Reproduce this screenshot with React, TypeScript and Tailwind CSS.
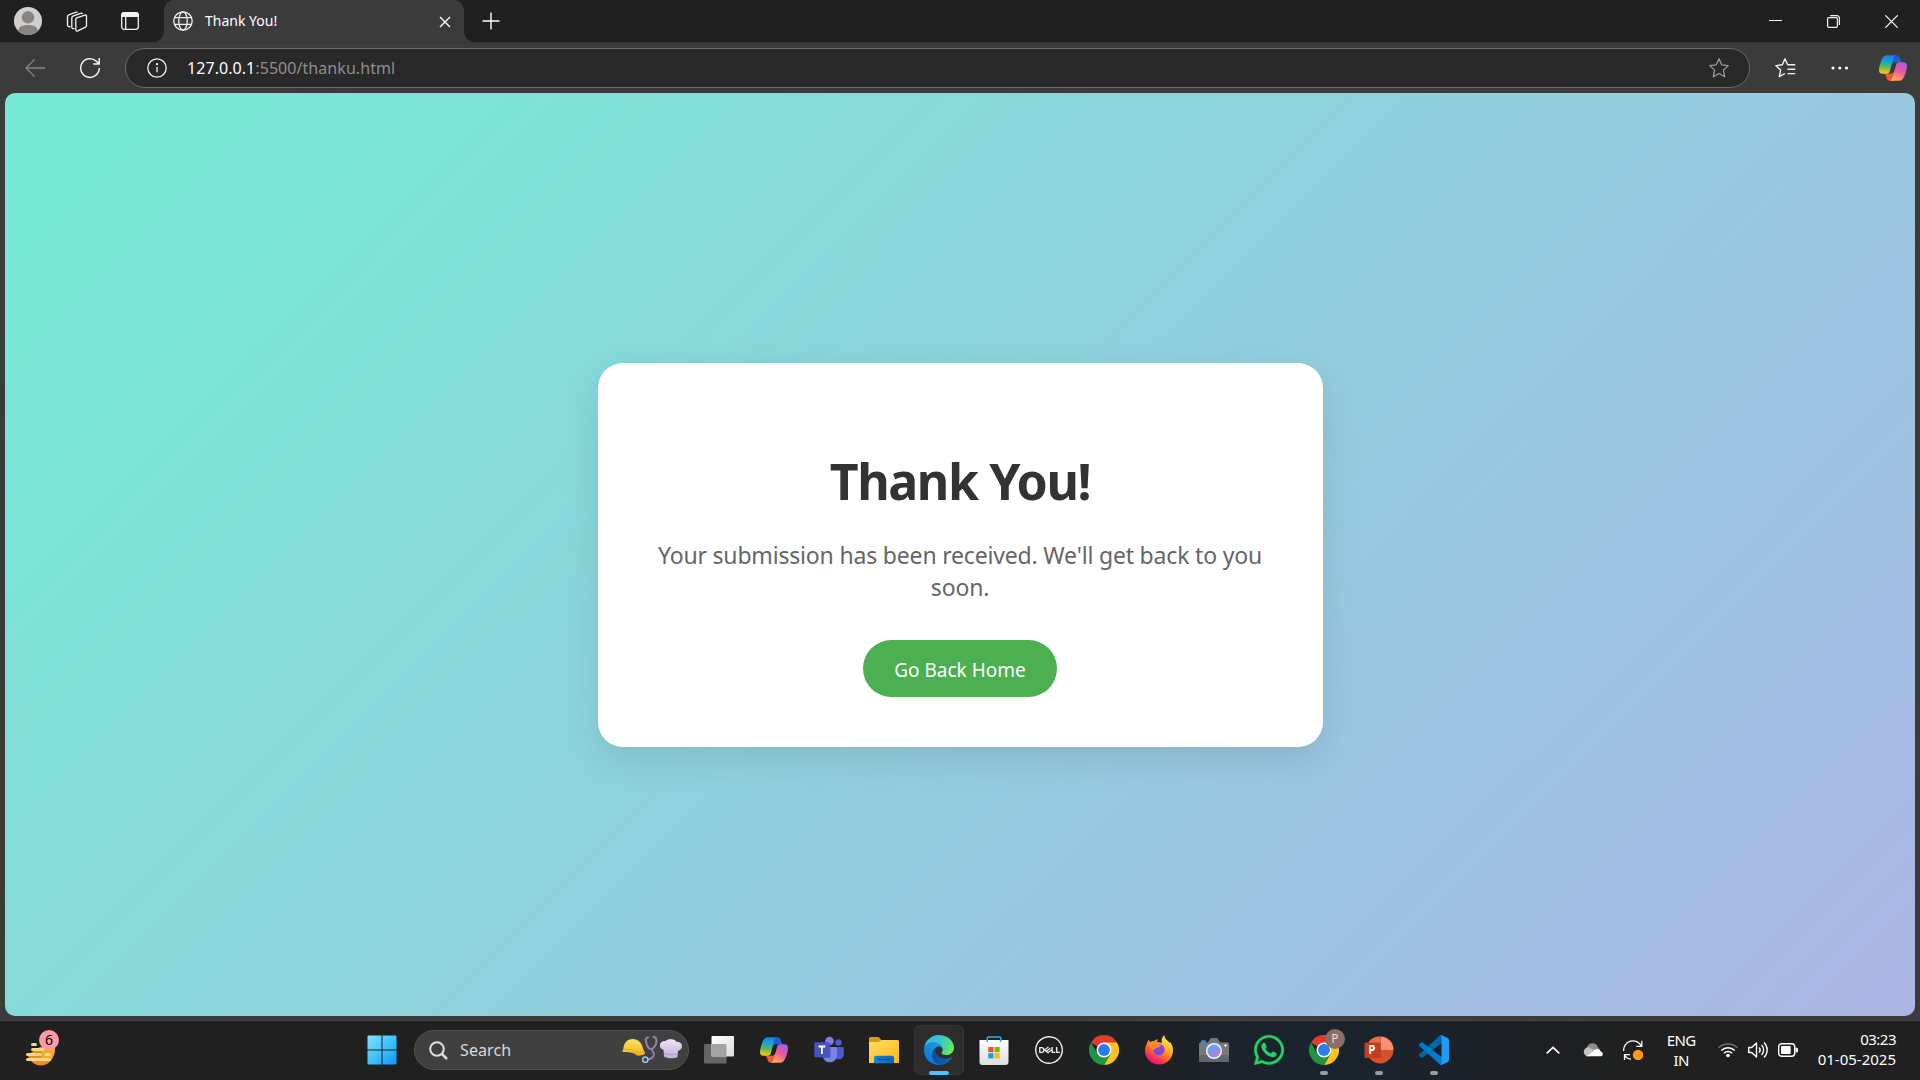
import type { ReactNode } from "react";
import { FaWhatsapp } from "react-icons/fa";
import { SiDell } from "react-icons/si";

function Copilot({ id }: { id: string }) {
  return (
    <svg viewBox="0 0 24 22" className="h-[26px] w-[28px]">
      <defs>
        <linearGradient id={`${id}a`} x1="0.2" y1="0" x2="0.1" y2="1">
          <stop offset="0" stopColor="#1583e8" />
          <stop offset="0.3" stopColor="#12a3d8" />
          <stop offset="0.6" stopColor="#58b95a" />
          <stop offset="0.9" stopColor="#e8c316" />
        </linearGradient>
        <linearGradient id={`${id}b`} x1="0.8" y1="0" x2="0.3" y2="1">
          <stop offset="0" stopColor="#a45bf0" />
          <stop offset="0.5" stopColor="#f05a94" />
          <stop offset="1" stopColor="#ffb15c" />
        </linearGradient>
        <linearGradient id={`${id}c`} x1="0" y1="0" x2="1" y2="1">
          <stop offset="0" stopColor="#1a4fd0" />
          <stop offset="1" stopColor="#1572ee" />
        </linearGradient>
      </defs>
      <path fill={`url(#${id}c)`} d="M17.533 1.829A2.528 2.528 0 0015.11 0h-.737a2.531 2.531 0 00-2.484 2.087l-1.263 6.937.314-1.08a2.528 2.528 0 012.424-1.833h4.284l1.797.706 1.731-.706h-.505a2.528 2.528 0 01-2.423-1.829l-.715-2.453z" />
      <path fill="#ef5b35" d="M6.726 20.16A2.528 2.528 0 009.152 22h1.566c1.37 0 2.49-1.1 2.525-2.48l.17-6.69-.357 1.228a2.528 2.528 0 01-2.423 1.83h-4.32l-1.54-.842-1.667.843h.497c1.124 0 2.113.75 2.426 1.84l.697 2.432z" />
      <path fill={`url(#${id}a)`} d="M15 0H6.252c-2.5 0-4 3.331-5 6.662-1.184 3.947-2.734 9.225 1.75 9.225H6.78c1.13 0 2.12-.753 2.43-1.847.657-2.317 1.809-6.359 2.713-9.436.46-1.563.842-2.906 1.43-3.742A1.97 1.97 0 0115 0" />
      <path fill={`url(#${id}b)`} d="M9 22h8.749c2.5 0 4-3.332 5-6.663 1.184-3.948 2.734-9.227-1.75-9.227H17.22c-1.129 0-2.12.754-2.43 1.848a1149.2 1149.2 0 01-2.713 9.437c-.46 1.564-.842 2.907-1.43 3.743A1.97 1.97 0 019 22" />
    </svg>
  );
}

function Chrome() {
  return (
    <svg viewBox="0 0 48 48" className="size-[30px]">
      <path fill="#e33b2e" d="M24 24 3.2 12A24 24 0 0 1 44.8 12Z" />
      <path fill="#fcc31e" d="M24 12H44.8A24 24 0 0 1 24 48L34.4 30Z" />
      <path fill="#229342" d="M3.2 12A24 24 0 0 0 24 48L34.4 30 24 24 13.6 30Z" />
      <circle cx="24" cy="24" r="12" fill="#fff" />
      <circle cx="24" cy="24" r="9.5" fill="#2b7bf0" />
    </svg>
  );
}

function Edge() {
  return (
    <svg viewBox="0 0 256 256" className="size-[30px]">
      <defs>
        <linearGradient id="e1" x1="0.2" y1="0.5" x2="1" y2="0.5">
          <stop offset="0" stopColor="#0c4f9c" />
          <stop offset="1" stopColor="#1268bd" />
        </linearGradient>
        <linearGradient id="e2" x1="0.7" y1="0" x2="0.3" y2="1">
          <stop offset="0" stopColor="#1b9de2" />
          <stop offset="0.5" stopColor="#1384dc" />
          <stop offset="1" stopColor="#0a78d4" />
        </linearGradient>
        <linearGradient id="e3" x1="0" y1="0.3" x2="1" y2="0.6">
          <stop offset="0" stopColor="#35b9ee" />
          <stop offset="0.5" stopColor="#36c5c8" />
          <stop offset="1" stopColor="#68eb58" />
        </linearGradient>
      </defs>
      <path fill="url(#e1)" d="M231 190.5c-3.4 1.8-6.9 3.4-10.5 4.7a101.5 101.5 0 0 1-35.9 6.5c-47.2 0-88.3-32.5-88.3-74.2.1-11.4 6.4-21.9 16.4-27.3-42.7 1.8-53.7 46.3-53.7 72.4 0 73.8 68 81.3 82.7 81.3 7.9 0 19.8-2.3 27-4.6l1.3-.4a128.3 128.3 0 0 0 66.6-52.8 4 4 0 0 0-5.6-5.6z" />
      <path fill="url(#e2)" d="M105.7 241.4a79.2 79.2 0 0 1-22.7-21.3 80.7 80.7 0 0 1 29.5-120c3.2-1.5 8.5-4.1 15.6-4a32.4 32.4 0 0 1 25.7 13 31.9 31.9 0 0 1 6.3 18.7c0-.2 24.5-79.6-80-79.6-43.9 0-80 41.7-80 78.2-.2 19.3 4 38.5 12.1 56a128 128 0 0 0 156.4 67 75.5 75.5 0 0 1-62.8-8z" />
      <path fill="url(#e3)" d="M152.3 148.9c-.8 1-3.3 2.5-3.3 5.7 0 2.6 1.7 5.1 4.7 7.2 14.4 10 41.5 8.7 41.6 8.7 10.7 0 21.1-2.9 30.3-8.3a61.4 61.4 0 0 0 30.4-52.9c.3-22.4-8-37.3-11.3-43.9C223.4 23.8 177.7 0 128 0A128 128 0 0 0 0 126.2c.5-36.5 36.8-66 80-66 3.5 0 23.5.3 42 10.1 16.3 8.6 24.9 19 30.8 29.2 6.2 10.7 7.3 24.1 7.3 29.5 0 5.3-2.7 13.3-7.8 19.9z" />
    </svg>
  );
}

function Firefox() {
  return (
    <svg viewBox="0 0 30 30" className="size-[30px]">
      <defs>
        <linearGradient id="f1" x1="0.8" y1="0.05" x2="0.25" y2="0.95">
          <stop offset="0" stopColor="#fff04a" />
          <stop offset="0.35" stopColor="#ffb52c" />
          <stop offset="0.6" stopColor="#ff6a2e" />
          <stop offset="0.95" stopColor="#f0146e" />
        </linearGradient>
        <linearGradient id="f2" x1="0.8" y1="0" x2="0.3" y2="1">
          <stop offset="0" stopColor="#a93ad8" />
          <stop offset="1" stopColor="#5f52e8" />
        </linearGradient>
      </defs>
      <path fill="url(#f1)" d="M15 29.5C7.300 29.500 1 23.500 1 16c0-3.500 1-6.200 2.300-8 .1-1.400.6-2.400 1.400-3.200.2 1 .5 1.700 1 2.200C7 6.400 8.500 6 10 6.200c1.500-1.500 2.600-1.800 4-1.900-1 1-1.300 2-1 3.200 2-.4 3.700 0 5 .6-1-2.700-.2-5.600 2.200-8 .3 2.700 1.500 4 3.200 5.600 1.200.6 1.700 1.200 2.200 2.400l.6-1.100C28.100 9.500 29 12.300 29 15.500c0 8-6.300 14-14 14Z" />
      <circle cx="14.800" cy="14.500" r="5.800" fill="url(#f2)" />
      <path fill="#ff8a25" d="M3.300 8.500 4.600 5l1.500 2.300L10 6.200l3.800-1.700-.9 3 .9 1.500 3.500 1.200c-.9 1.700-2.200 2-4 2.300-1.500.6-2.900 1-3.300 3C7.500 14.500 5 11.500 3.300 8.500Z" />
    </svg>
  );
}

function VsCode() {
  return (
    <svg viewBox="0 0 100 100" className="size-[30px]">
      <path fill="#0065a9" d="M96.500 10.800 75.900.9a6.200 6.200 0 0 0-7.100 1.200L1.400 63.600a4.200 4.200 0 0 0 0 6.200l5.500 5a4.200 4.200 0 0 0 5.300.2L93.300 13.400c2.700-2.100 6.700-.1 6.700 3.300v-.3c0-2.400-1.400-4.600-3.500-5.600Z" />
      <path fill="#007acc" d="m96.500 89.200-20.600 9.900a6.200 6.200 0 0 1-7.100-1.200L1.400 36.400a4.200 4.200 0 0 1 0-6.200l5.500-5a4.200 4.200 0 0 1 5.300-.2l81.100 61.600c2.700 2.100 6.700.1 6.700-3.300v.2c0 2.400-1.400 4.600-3.500 5.700Z" />
      <path fill="#1f9cf0" d="M75.900 99.100a6.200 6.200 0 0 1-7.200-1.200c2.300 2.300 6.300.7 6.300-2.600V4.700c0-3.300-4-5-6.300-2.600A6.200 6.200 0 0 1 75.900.9l20.600 9.900A6.200 6.200 0 0 1 100 16.400v67.200c0 2.400-1.400 4.600-3.500 5.600Z" />
    </svg>
  );
}

function PowerPoint() {
  return (
    <svg viewBox="0 0 30 30" className="size-[30px]">
      <path fill="#d35230" d="M16.500 15 3.500 20A13.500 13.500 0 0 0 29.500 15Z" />
      <path fill="#ed6c47" d="M16.500 1.500A13 13 0 0 0 3.500 20L16.500 15Z" />
      <path fill="#ff8f6b" d="M16.500 1.500A13.300 13.300 0 0 1 29.500 15h-13Z" />
      <path fill="#a33018" opacity=".5" d="M8 8h8a1 1 0 0 1 1 1v14H6Z" />
      <rect x="0.500" y="7.500" width="15.500" height="15.500" rx="1" fill="#c43e1c" />
      <text x="4.200" y="19.300" fill="#fff" className="font-['Open_Sans'] text-[11.500px] font-bold">P</text>
    </svg>
  );
}

function Teams() {
  return (
    <svg viewBox="0 0 30 30" className="size-[30px]">
      <circle cx="24.500" cy="7.500" r="3.200" fill="#5059c9" />
      <path fill="#5059c9" d="M18 12h10.500a1.300 1.300 0 0 1 1.300 1.300v6.200a4.800 4.800 0 0 1-4.800 4.800h-4Z" />
      <circle cx="15.500" cy="6" r="4.300" fill="#7b83eb" />
      <path fill="#7b83eb" d="M10 12h11.500a1.500 1.500 0 0 1 1.500 1.500v7.300a7.300 7.300 0 0 1-14.500 0Z" />
      <path fill="#3d448f" opacity=".6" d="M9 8h6.500a1 1 0 0 1 1 1v14H9Z" />
      <rect x="0.300" y="7.300" width="15" height="15" rx="1" fill="#4a52bd" />
      <path stroke="#fff" strokeWidth="1.800" fill="none" d="M4.500 11.500h6.800M7.900 11.500v7.500" />
    </svg>
  );
}

function Folder() {
  return (
    <svg viewBox="0 0 30 30" className="size-[30px]">
      <defs>
        <linearGradient id="fo" x1="0" y1="0" x2="1" y2="1">
          <stop offset="0" stopColor="#ffdc6b" />
          <stop offset="1" stopColor="#fdb90f" />
        </linearGradient>
        <linearGradient id="fb" x1="0" y1="0" x2="1" y2="0">
          <stop offset="0" stopColor="#1487dc" />
          <stop offset="1" stopColor="#0a63b4" />
        </linearGradient>
      </defs>
      <path fill="#dd9c07" d="M0 3.500A1.500 1.500 0 0 1 1.500 2h7.200c.7 0 1.200.3 1.600.7L12.500 5v4H0Z" />
      <path fill="url(#fo)" d="M0 7h9.500l3-2H28.500A1.500 1.500 0 0 1 30 6.500V28H0Z" />
      <path fill="url(#fb)" d="M5 28.200V23a2.200 2.200 0 0 1 2.200-2.200h15.600A2.200 2.200 0 0 1 25 23v5.200Z" />
      <rect x="8" y="23.800" width="14" height="1.400" rx=".7" fill="#0a4f92" />
    </svg>
  );
}

function Store() {
  return (
    <svg viewBox="0 0 30 30" className="size-[30px]">
      <defs>
        <linearGradient id="st" x1="0" y1="0" x2="0" y2="1">
          <stop offset="0" stopColor="#ffffff" />
          <stop offset="1" stopColor="#dedede" />
        </linearGradient>
      </defs>
      <path fill="url(#st)" d="M.500 5h29v22a3 3 0 0 1-3 3h-23a3 3 0 0 1-3-3Z" />
      <path fill="none" stroke="#28aeea" strokeWidth="1.600" d="M8.300 7V3a1 1 0 0 1 1-1h11.400a1 1 0 0 1 1 1v4" />
      <path fill="#f25022" d="M9.300 12h5.200v5.200H9.300z" />
      <path fill="#7fba00" d="M15.500 12h5.200v5.200h-5.200z" />
      <path fill="#00a4ef" d="M9.300 18.200h5.200v5.200H9.300z" />
      <path fill="#ffb900" d="M15.500 18.200h5.200v5.200h-5.200z" />
    </svg>
  );
}

function Camera() {
  return (
    <svg viewBox="0 0 30 30" className="size-[30px]">
      <defs>
        <linearGradient id="ca" x1="0.2" y1="0" x2="0.8" y2="1">
          <stop offset="0" stopColor="#4fb2ee" />
          <stop offset="0.500" stopColor="#8b8de8" />
          <stop offset="1" stopColor="#c97be0" />
        </linearGradient>
      </defs>
      <rect x="2" y="5.200" width="5" height="4" rx="1" fill="#1e8fd8" />
      <path fill="#747a80" d="M1.500 7.500H9l1.800-3.300C11.200 3.500 11.800 3 12.600 3h4.800c.8 0 1.400.5 1.800 1.200L21 7.500h7.500A1.500 1.500 0 0 1 30 9v16.500a1.500 1.500 0 0 1-1.500 1.500h-27A1.500 1.500 0 0 1 0 25.500V9a1.500 1.500 0 0 1 1.500-1.500Z" />
      <path fill="#62686e" d="M0 20h30v5.500a1.500 1.500 0 0 1-1.500 1.500h-27A1.500 1.500 0 0 1 0 25.500Z" />
      <circle cx="15" cy="16" r="8" fill="#f5f5f5" />
      <circle cx="15" cy="16" r="6.500" fill="url(#ca)" />
      <path stroke="#e8e8e8" d="M26.500 9v3M25 10.500h3" />
    </svg>
  );
}

function TaskView() {
  return (
    <svg viewBox="0 0 30 30" className="size-[30px]">
      <defs>
        <linearGradient id="tv" x1="0" y1="0" x2="1" y2="1">
          <stop offset="0" stopColor="#fff" />
          <stop offset="1" stopColor="#dcdcdc" />
        </linearGradient>
      </defs>
      <rect x="0" y="9" width="22.500" height="19.500" rx="1" fill="#666" />
      <rect x="7.500" y="1" width="22.500" height="20.500" rx="1" fill="url(#tv)" />
      <path fill="#a3a3a3" d="M7.500 9h14a1 1 0 0 1 1 1v11.500h-14a1 1 0 0 1-1-1Z" />
    </svg>
  );
}

function TaskbarApp({ children, active, running }: { children: ReactNode; active?: boolean; running?: boolean }) {
  return (
    <div className={active ? "relative flex size-[50px] items-center justify-center rounded-md border border-[#373737] bg-[#2d2d2d]" : "relative flex size-[50px] items-center justify-center"}>
      {children}
      {active && <span className="absolute -bottom-px h-1 w-5 rounded-full bg-[#4cc2ff]" />}
      {running && <span className="absolute bottom-0 h-1 w-2 rounded-full bg-[#9a9da1]" />}
    </div>
  );
}

function SearchArt() {
  return (
    <svg viewBox="0 0 62 30" className="h-[30px] w-[62px]">
      <defs>
        <linearGradient id="hh" x1="0" y1="0" x2="0" y2="1">
          <stop offset="0" stopColor="#ffe25a" />
          <stop offset="1" stopColor="#eeb41e" />
        </linearGradient>
        <linearGradient id="ch" x1="0" y1="0" x2="0" y2="1">
          <stop offset="0" stopColor="#eee4f6" />
          <stop offset="1" stopColor="#c6add9" />
        </linearGradient>
      </defs>
      <path fill="url(#hh)" d="M1.200 14.500C1.600 8 5.500 4 10.500 4c6 0 10 4.500 11 11l1.500 2.500c0 2-1.500 2.500-3.500 2.500-3 1.500-5 .5-7-1.500-4-1.500-8-1.500-11.800-1.500C.1 16 .4 15 1.200 14.500Z" />
      <path fill="none" stroke="#c58d12" strokeWidth=".7" d="M2 14.500c4-.8 9 0 13 2.500 2 1 4.500 1 6.500-.5" opacity=".5" />
      <path fill="none" stroke="#9480b0" strokeWidth="2" strokeLinecap="round" d="M26 2.500c-2.500.5-2.500 2-2 4 .8 4.500 2.800 7.500 5 7.500 3 0 5.500-4.500 5.500-8.500 0-2-.5-3.500-3-3.500M29.500 14c1.500 3 3.500 4.500 2 7-1.500 2.800-4.500 3.500-7.500 3.500" />
      <circle cx="23.300" cy="24.700" r="2.600" fill="#35455e" stroke="#9fc6ee" strokeWidth="1.500" />
      <path fill="url(#ch)" d="M41.500 14.800C38.500 14 37.500 12 38 9.500c.5-2.500 3-3.800 5.500-3.300C44.500 4.500 47 4 49 4.200c2.500-.2 4.500.8 5.500 2.600 2.800-.2 5.300 1.200 5.500 3.700.2 3-1.500 4.800-4 5.500l-.5 6c-2.500 2-11 1.500-13.500-.5Z" />
      <path fill="none" stroke="#a992bf" strokeWidth=".7" d="M42 18.500c3.500 1 9 1.200 13.300.3" />
    </svg>
  );
}

function BrowserHeader() {
  return (
    <header className="bg-[#3b3b3b]">
      <div className="flex h-[42px] bg-[#202020]">
        <div className="flex w-[164px] items-center pl-3.5">
          <svg viewBox="0 0 28 28" className="size-7">
            <circle cx="14" cy="14" r="14" fill="#d2d0ce" />
            <circle cx="14" cy="10.300" r="6.200" fill="#8a8481" />
            <path fill="#8a8481" d="M4 23.800c1-4.200 4.600-5.800 10-5.800s9 1.600 10 5.800A14 14 0 0 1 4 23.800Z" />
          </svg>
          <svg viewBox="0 0 22 22" className="mt-px ml-6 size-[22px] fill-none stroke-[#f2f2f2]" strokeWidth="1.300" strokeLinejoin="round">
            <path d="M9.800 8.300c0-.7.3-1.200 1-1.500l8-2.700c1-.3 1.700.1 1.700 1.100v9.300c0 .8-.4 1.300-1 1.600l-7.700 3.800c-1.100.5-2 .1-2-1.100Z" />
            <path d="M8.500 17.500c-1.400.5-2.700 0-2.700-1.200V7c0-.9.400-1.500 1.200-1.800L14.500 2.400c1-.4 1.700-.2 2 .5" />
            <path d="M4.500 15.600c-1.700.5-3-.2-3-1.500V5.700c0-.9.400-1.500 1.200-1.800L9.500 1.300c1-.4 1.700-.2 2 .4" />
          </svg>
          <svg viewBox="0 0 20 20" className="ml-8 size-5 fill-none stroke-[#f2f2f2]" strokeWidth="1.300">
            <rect x="1.700" y="1.700" width="16.600" height="16.600" rx="2.500" />
            <path fill="#f2f2f2" stroke="none" d="M1 6V4.500A3.500 3.500 0 0 1 4.500 1h11A3.500 3.500 0 0 1 19 4.500V6Z" />
            <path d="M5.700 5v13" />
          </svg>
        </div>
        <div className="relative flex w-[300px] items-center rounded-t-[10px] bg-[#3b3b3b] pl-[9px] pr-3.5">
          <span className="absolute bottom-0 -left-[10px] size-[10px] bg-[radial-gradient(circle_at_0_0,#202020_9.500px,#3b3b3b_10px)]" />
          <span className="absolute -right-[10px] bottom-0 size-[10px] bg-[radial-gradient(circle_at_100%_0,#202020_9.500px,#3b3b3b_10px)]" />
          <svg viewBox="0 0 20 20" className="size-5 fill-none stroke-[#f2f2f2]" strokeWidth="1.300">
            <circle cx="10" cy="10" r="9.200" />
            <ellipse cx="10" cy="10" rx="4.200" ry="9.200" />
            <path d="M1.500 6.700h17M1.500 13.300h17" />
          </svg>
          <span className="ml-3 text-[14px] leading-5 text-white">Thank You!</span>
          <svg viewBox="0 0 12 12" className="mt-px -mr-px ml-auto size-3 stroke-white" strokeWidth="1.400">
            <path d="m1 1 10 10M11 1 1 11" />
          </svg>
        </div>
        <svg viewBox="0 0 18 18" className="mt-3 ml-[18px] size-[18px] stroke-white" strokeWidth="1.400">
          <path d="M9 .500v17M.500 9h17" />
        </svg>
        <div className="mr-[22px] ml-auto flex items-center gap-[45px]">
          <svg viewBox="0 0 13 13" className="size-[13px] stroke-white"><path d="M0 5.500h13" /></svg>
          <svg viewBox="0 0 13 13" className="size-[13px] fill-none stroke-[#f2f2f2]" strokeWidth="1.200">
            <rect x=".600" y="2.600" width="9.800" height="9.800" rx="1.200" />
            <path d="M3 .600h7A2.400 2.400 0 0 1 12.400 3v7" />
          </svg>
          <svg viewBox="0 0 13 13" className="size-[13px] stroke-white" strokeWidth="1.200"><path d="m.300.300 12.400 12.400M12.700.300.300 12.700" /></svg>
        </div>
      </div>
      <div className="flex h-[51px] items-center border-t border-[#343434] pr-[13px] pl-[25px]">
        <svg viewBox="0 0 20 18" className="h-[18px] w-5 fill-none stroke-[#858585]" strokeWidth="1.300">
          <path d="M20 9H1M9.500.500 1 9l8.500 8.500" />
        </svg>
        <svg viewBox="0 0 22 22" className="ml-[34px] size-[22px] fill-none stroke-[#f2f2f2]" strokeWidth="1.500">
          <path d="M20.300 11A9.300 9.300 0 1 1 17.500 4.400L20 6.700M20.200 1v6h-6" />
        </svg>
        <div className="ml-[24px] flex h-10 w-[1625px] items-center rounded-full border border-[#6a6a6a] bg-[#292929] pr-[19px] pl-[21px]">
          <svg viewBox="0 0 20 20" className="size-5 fill-none stroke-[#f2f2f2]" strokeWidth="1.300">
            <circle cx="10" cy="10" r="9.200" />
            <path d="M10 9v5.300" />
            <circle cx="10" cy="6.200" r=".500" />
          </svg>
          <p className="ml-5 text-[16px] leading-5 tracking-[0.06px] text-[#8f8f8f]"><span className="text-white">127.0.0.1</span>:5500/thanku.html</p>
          <svg viewBox="0 0 22 22" className="ml-auto size-[22px] fill-none stroke-[#9a9a9a]" strokeWidth="1.300" strokeLinejoin="round">
            <path d="m11 1.800 2.700 6 6.500.800-4.800 4.500 1.300 6.600L11 16.500l-5.700 3.200 1.300-6.600L1.800 8.600l6.500-.800Z" />
          </svg>
        </div>
        <svg viewBox="0 0 22 22" className="ml-6 size-[22px] fill-none stroke-[#f2f2f2]" strokeWidth="1.400" strokeLinejoin="round">
          <path d="M13.700 7.800 11 1.800l-2.700 6-6.500.800 4.800 4.500-1.300 6.600L11 16.500M13.500 7.800h7.800M13.500 12.200h7.800M13.500 16.600h7.800" />
        </svg>
        <svg viewBox="0 0 18 4" className="ml-[35px] h-1 w-[18px] fill-white">
          <circle cx="2" cy="2" r="1.600" /><circle cx="8.800" cy="2" r="1.600" /><circle cx="15.500" cy="2" r="1.600" />
        </svg>
        <div className="ml-auto"><Copilot id="tb" /></div>
      </div>
    </header>
  );
}

function Taskbar() {
  return (
    <footer className="flex h-[59px] items-center bg-[linear-gradient(90deg,#202020_0%,#202020_55%,#1a242e_68%,#1b222a_74%,#202020_85%,#202020_100%)] pb-px">
      <div className="relative ml-[26px] h-[35px] w-[34px]">
        <svg viewBox="0 0 34 36" className="h-9 w-[34px]">
          <path fill="#f08a1c" d="M1.500 22 14 14l15-.500c0 12-6 19-14.500 19-5.500 0-10.500-4-13-10.500Z" />
          <path fill="#f6aa28" d="m16 14 13-1c.3 6-1 10-4 14H16Z" />
          <path stroke="#f3d98a" strokeWidth="3" strokeLinecap="round" d="M6.500 11.500h3M6.500 16.500H17M1.500 21.500h13M1.500 26.500h22M20 21.500h3.500" />
        </svg>
        <span className="absolute -top-[3px] left-[13px] flex size-5 items-center justify-center rounded-full bg-[#ff99a4] text-[14px] leading-none text-black">6</span>
      </div>
      <div className="ml-[297px] flex size-[50px] items-center justify-center">
        <svg viewBox="0 0 30 30" className="size-[30px]">
          <defs>
            <linearGradient id="wn" gradientUnits="userSpaceOnUse" x1="0" y1="0" x2="30" y2="30">
              <stop offset="0" stopColor="#8be0ff" />
              <stop offset="0.500" stopColor="#3fc3ff" />
              <stop offset="1" stopColor="#0f93fb" />
            </linearGradient>
          </defs>
          <path fill="url(#wn)" d="M1.500.500h13v14H.500v-13a1 1 0 0 1 1-1ZM15.500.500h13a1 1 0 0 1 1 1v13h-14ZM.500 15.500h14v14h-13a1 1 0 0 1-1-1ZM15.500 15.500h14v13a1 1 0 0 1-1 1h-13Z" />
        </svg>
      </div>
      <div className="ml-[7px] flex h-10 w-[275px] items-center rounded-full border border-[#525252] bg-[#404040] pr-1 pl-3.5">
        <svg viewBox="0 0 19 19" className="size-[19px] fill-none stroke-[#e0e0e0]" strokeWidth="2">
          <circle cx="8" cy="8" r="6.800" /><path d="m13 13 5 5" strokeWidth="2.500" />
        </svg>
        <span className="ml-3 text-[16px] leading-5 tracking-[0.1px] text-[#dadada]">Search</span>
        <div className="ml-auto"><SearchArt /></div>
      </div>
      <div className="ml-[5px] flex gap-[5px]">
        <TaskbarApp><TaskView /></TaskbarApp>
        <TaskbarApp><Copilot id="tk" /></TaskbarApp>
        <TaskbarApp><Teams /></TaskbarApp>
        <TaskbarApp><Folder /></TaskbarApp>
        <TaskbarApp active><Edge /></TaskbarApp>
        <TaskbarApp><Store /></TaskbarApp>
        <TaskbarApp><SiDell className="size-7 text-[#ececec]" /></TaskbarApp>
        <TaskbarApp><Chrome /></TaskbarApp>
        <TaskbarApp><Firefox /></TaskbarApp>
        <TaskbarApp><Camera /></TaskbarApp>
        <TaskbarApp><FaWhatsapp className="size-[34px] stroke-[#25d366] stroke-[6px] text-[#25d366]" /></TaskbarApp>
        <TaskbarApp running>
          <Chrome />
          <span className="absolute top-1 left-[26px] flex size-5 items-center justify-center rounded-full bg-[#8d6e63] text-[12px] leading-none text-[#e8dcd8]">P</span>
        </TaskbarApp>
        <TaskbarApp running><PowerPoint /></TaskbarApp>
        <TaskbarApp running><VsCode /></TaskbarApp>
      </div>
      <div className="mr-6 ml-auto flex items-center text-[15px] leading-5 text-white">
        <svg viewBox="0 0 14 8" className="h-2 w-3.5 fill-none stroke-white" strokeWidth="1.700"><path d="m.700 7.300 6.300-6 6.300 6" /></svg>
        <svg viewBox="0 0 20 14" className="ml-[23px] h-3.5 w-5">
          <path fill="#8e8e8e" d="M4 5a5.500 5.500 0 0 1 10.500-1.500L17 7 8 10Z" />
          <path fill="#c4c4c4" d="M4.500 13.200A4.300 4.300 0 1 1 6 4.400L13 8l-6 5.200Z" />
          <path fill="#fff" d="M3.500 13.300 10 8.500c1-1.700 2.300-2.500 4-2.500 2 0 3.400 1 3.800 2.500 3 .8 2.700 4.800-.8 4.800Z" />
        </svg>
        <svg viewBox="0 0 20 20" className="ml-5 size-5 fill-none stroke-white" strokeWidth="1.300">
          <path d="M.700 11A9.300 9.300 0 0 1 18.300 6M18.800.800v5.500h-5.500M8 19c-3 0-5.200-1.500-6.300-4M1.500 20v-5.300H7" />
          <circle cx="15" cy="15" r="5.200" fill="#ff9a0a" stroke="none" />
        </svg>
        <div className="-mt-px ml-6 w-[29px] text-center tracking-[-0.6px]">ENG<br />IN</div>
        <svg viewBox="0 0 20 16" className="ml-[22px] h-4 w-5 fill-none stroke-white" strokeWidth="1.500">
          <path stroke="#6b6b6b" d="M.500 6a13.500 13.500 0 0 1 19 0" />
          <path d="M3.300 8.500a9.500 9.500 0 0 1 13.400 0M6 11.200a5.700 5.700 0 0 1 8 0" />
          <circle cx="10" cy="13.500" r="1.800" fill="#fff" stroke="none" />
        </svg>
        <svg viewBox="0 0 20 18" className="ml-[10px] h-[18px] w-5 fill-none stroke-white" strokeWidth="1.400" strokeLinejoin="round">
          <path d="M.700 6.500h3L8.500 2v14l-4.800-4.500h-3ZM11.200 6.500a4 4 0 0 1 0 5M13.500 4a7 7 0 0 1 0 10M16 1.500a10.500 10.500 0 0 1 0 15" />
        </svg>
        <svg viewBox="0 0 20 14" className="ml-2.5 h-3.5 w-5">
          <rect x=".700" y=".700" width="16" height="12.600" rx="3" fill="none" stroke="#fff" strokeWidth="1.400" />
          <rect x="3" y="3" width="9.700" height="8" rx="1" fill="#fff" />
          <path fill="#fff" d="M17.500 4.500h1a1.500 1.500 0 0 1 1.500 1.500v2a1.500 1.500 0 0 1-1.500 1.500h-1Z" />
        </svg>
        <div className="-mt-0.5 ml-5 text-right"><span className="tracking-[-0.5px]">03:23</span><br />01-05-2025</div>
      </div>
    </footer>
  );
}

export default function App() {
  return (
    <div className="flex h-[1080px] w-[1920px] flex-col overflow-hidden bg-[#3b3b3b] font-['Noto_Sans',sans-serif]">
      <BrowserHeader />
      <main className="mx-[5px] flex h-[923px] items-start justify-center overflow-hidden rounded-[10px] bg-[linear-gradient(135deg,#74ebd5,#acb6e5)]">
        <section className="mt-[270px] flex h-[384px] w-[725px] flex-col items-center rounded-[25px] bg-white text-center shadow-[0_12px_37px_rgba(0,0,0,0.1)]">
          <h1 className="mt-[84px] text-[50px] leading-[68px] font-bold tracking-[-1.4px] text-[#333]">Thank You!</h1>
          <p className="mt-[24px] w-[620px] text-[23px] leading-8 tracking-[-0.18px] text-[#666]">Your submission has been received. We&apos;ll get back to you soon.</p>
          <button className="mt-[37px] flex h-[57px] w-[194px] items-center justify-center rounded-full bg-[#4caf50] pt-0.5 text-[19px] leading-6 text-white">Go Back Home</button>
        </section>
      </main>
      <div className="h-[5px] border-b border-[#444]" />
      <Taskbar />
    </div>
  );
}
